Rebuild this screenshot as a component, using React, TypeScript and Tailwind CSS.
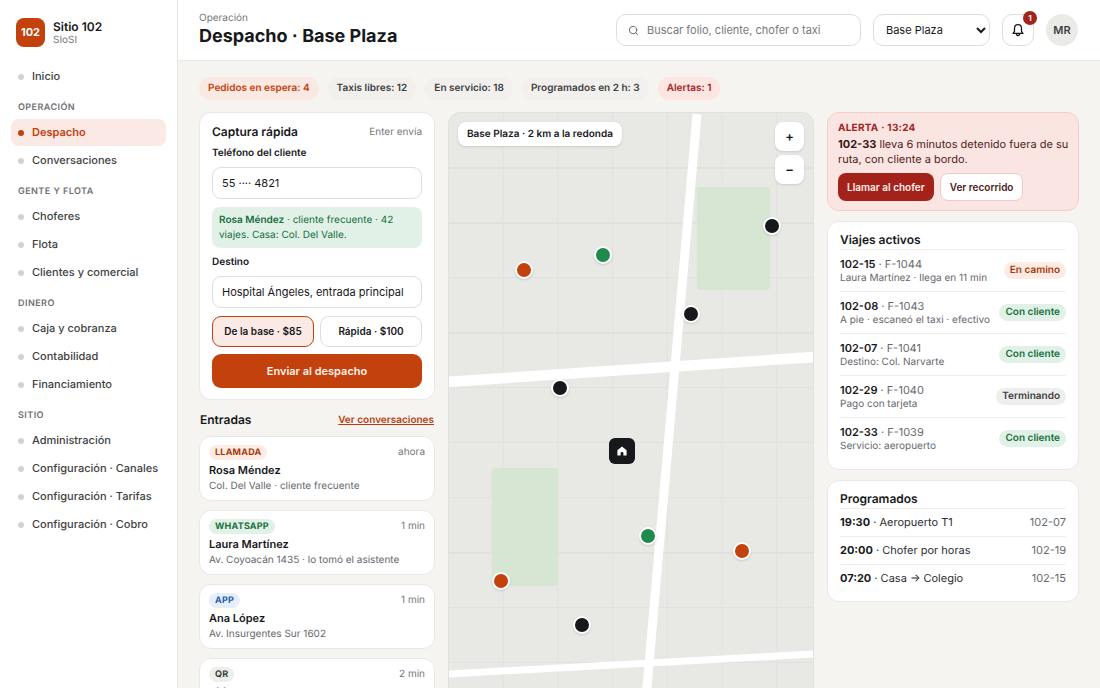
import { Search } from 'lucide-react'
import clsx from 'clsx'

type Tone = 'orange' | 'green' | 'blue' | 'gray' | 'red'

const toneClasses: Record<Tone, string> = {
  orange: 'bg-[#fdece4] text-[#a8380c]',
  green: 'bg-[#e1f1e7] text-[#17703d]',
  blue: 'bg-[#e6eefb] text-[#1d5fb0]',
  gray: 'bg-[#eeeeec] text-[#3d3f42]',
  red: 'bg-[#fde5e2] text-[#a3231a]',
}

const navGroups = [
  { title: '', items: ['Inicio'] },
  { title: 'Operación', items: ['Despacho', 'Conversaciones'] },
  { title: 'Gente y flota', items: ['Choferes', 'Flota', 'Clientes y comercial'] },
  { title: 'Dinero', items: ['Caja y cobranza', 'Contabilidad', 'Financiamiento'] },
  {
    title: 'Sitio',
    items: ['Administración', 'Configuración · Canales', 'Configuración · Tarifas', 'Configuración · Cobro'],
  },
]

const entries: { channel: string; tone: Tone; time: string; name: string; detail: string }[] = [
  { channel: 'Llamada', tone: 'orange', time: 'ahora', name: 'Rosa Méndez', detail: 'Col. Del Valle · cliente frecuente' },
  { channel: 'WhatsApp', tone: 'green', time: '1 min', name: 'Laura Martínez', detail: 'Av. Coyoacán 1435 · lo tomó el asistente' },
  { channel: 'App', tone: 'blue', time: '1 min', name: 'Ana López', detail: 'Av. Insurgentes Sur 1602' },
  { channel: 'QR', tone: 'gray', time: '2 min', name: 'Sitio 102', detail: 'A pie · escaneó el taxi' },
]

const trips: { unit: string; folio: string; detail: string; status: string; tone: Tone }[] = [
  { unit: '102-15', folio: 'F-1044', detail: 'Laura Martínez · llega en 11 min', status: 'En camino', tone: 'orange' },
  { unit: '102-08', folio: 'F-1043', detail: 'A pie · escaneó el taxi · efectivo', status: 'Con cliente', tone: 'green' },
  { unit: '102-07', folio: 'F-1041', detail: 'Destino: Col. Narvarte', status: 'Con cliente', tone: 'green' },
  { unit: '102-29', folio: 'F-1040', detail: 'Pago con tarjeta', status: 'Terminando', tone: 'gray' },
  { unit: '102-33', folio: 'F-1039', detail: 'Servicio: aeropuerto', status: 'Con cliente', tone: 'green' },
]

const scheduled = [
  { time: '19:30', label: 'Aeropuerto T1', unit: '102-07' },
  { time: '20:00', label: 'Chofer por horas', unit: '102-19' },
  { time: '07:20', label: 'Casa → Colegio', unit: '102-15' },
]

// Positions in % of the map
const pins = [
  { x: 20.5, y: 25.6, color: 'bg-[#c2410c]' },
  { x: 42.3, y: 23.1, color: 'bg-[#1f8a4c]' },
  { x: 88.6, y: 18.4, color: 'bg-[#17181b]' },
  { x: 66.5, y: 32.8, color: 'bg-[#17181b]' },
  { x: 30.4, y: 44.8, color: 'bg-[#17181b]' },
  { x: 54.7, y: 68.9, color: 'bg-[#1f8a4c]' },
  { x: 80.5, y: 71.3, color: 'bg-[#c2410c]' },
  { x: 14.4, y: 76.2, color: 'bg-[#c2410c]' },
  { x: 36.5, y: 83.4, color: 'bg-[#17181b]' },
]

function BellIcon() {
  return (
    <svg viewBox="0 0 14 14" className="size-[14px]" fill="none" stroke="#17181b" strokeWidth="1.3" strokeLinejoin="round">
      <path d="M7 1.6C4.8 1.6 3.5 3.2 3.5 5.2V8.4L2.1 10.4H11.9L10.5 8.4V5.2C10.5 3.2 9.2 1.6 7 1.6Z" />
      <path d="M5.4 10.6C5.4 13.4 8.6 13.4 8.6 10.6" />
    </svg>
  )
}

function Sidebar() {
  return (
    <aside className="w-[178px] shrink-0 border-r border-[#e6e6e2] bg-white px-[11px] pt-[18px]">
      <div className="mb-4 flex items-center gap-2 pl-[5px]">
        <div className="flex size-[29px] items-center justify-center rounded-lg bg-[#c2410c] text-[11px] font-bold text-white">
          102
        </div>
        <div>
          <p className="text-[12px] leading-[14px] font-semibold text-[#17181b]">Sitio 102</p>
          <p className="text-[10px] leading-[12px] text-[#76787b]">SIoSI</p>
        </div>
      </div>
      <nav className="flex flex-col">
        {navGroups.map((group) => (
          <div key={group.title}>
            {group.title && (
              <p className="flex h-7 items-center px-[7px] pt-[5px] text-[9px] font-semibold tracking-wider text-[#6f7174] uppercase">
                {group.title}
              </p>
            )}
            {group.items.map((item) => (
              <a
                key={item}
                href="#"
                className={clsx(
                  'mb-px flex h-[27px] items-center gap-2 rounded-lg px-[7px] text-[11px]',
                  item === 'Despacho' ? 'bg-[#fae9e4] font-semibold text-[#c2410c]' : 'font-medium text-[#3d3f42]',
                )}
              >
                <span className={clsx('size-[6px] rounded-full', item === 'Despacho' ? 'bg-[#c2410c]' : 'bg-[#d3d3cf]')} />
                {item}
              </a>
            ))}
          </div>
        ))}
      </nav>
    </aside>
  )
}

function Header() {
  return (
    <header className="flex h-[61px] items-center gap-3 border-b border-[#e9e8e4] bg-white pr-[22px] pl-[21px]">
      <div className="mr-auto">
        <p className="text-[10px] leading-[14px] text-[#76787b]">Operación</p>
        <h1 className="text-[18px] leading-6 font-bold text-[#17181b]">Despacho · Base Plaza</h1>
      </div>
      <label className="flex h-8 w-[245px] items-center gap-2 rounded-[10px] border border-[#dededa] bg-white px-[11px]">
        <Search className="size-[11px] text-[#5f6164]" />
        <span className="sr-only">Buscar</span>
        <input
          type="search"
          placeholder="Buscar folio, cliente, chofer o taxi"
          className="min-w-0 flex-1 text-[11px] text-[#17181b] outline-none placeholder:text-[#76787b]"
        />
      </label>
      <select
        aria-label="Base"
        className="h-8 w-[117px] rounded-[10px] border border-[#dededa] bg-white pl-2 text-[11px] text-[#17181b]"
      >
        <option>Base Plaza</option>
      </select>
      <button
        aria-label="Notificaciones"
        className="relative flex size-8 items-center justify-center rounded-[10px] border border-[#dededa] bg-white"
      >
        <BellIcon />
        <span className="absolute -top-[4px] -right-[4px] flex size-[14px] items-center justify-center rounded-full bg-[#a3231a] text-[8px] font-bold text-white">
          1
        </span>
      </button>
      <div className="flex size-8 items-center justify-center rounded-full bg-[#eaeae6] text-[11px] font-semibold text-[#3d3f42]">
        MR
      </div>
    </header>
  )
}

function StatPill({ tone, children }: { tone: Tone; children: string }) {
  return (
    <li
      className={clsx(
        'flex h-[23px] items-center rounded-full px-[9px] text-[10px] font-semibold',
        tone === 'orange' && 'bg-[#fae9e2] text-[#c2410c]',
        tone === 'gray' && 'bg-[#f1f0ed] text-[#3d3f42]',
        tone === 'red' && 'bg-[#fde5e2] text-[#a3231a]',
      )}
    >
      {children}
    </li>
  )
}

function QuickCapture() {
  const inputClass =
    'mt-[6px] h-8 w-full rounded-[9px] border border-[#dededa] bg-white px-[9px] text-[11px] font-normal text-[#17181b] outline-none'
  return (
    <form className="rounded-xl border border-[#e9e8e4] bg-white px-3 pt-[10px] pb-[11px]">
      <div className="flex items-center justify-between">
        <h2 className="text-[12px] leading-[18px] font-semibold text-[#17181b]">Captura rápida</h2>
        <span className="text-[10px] text-[#76787b]">Enter envía</span>
      </div>
      <label className="mt-1 block text-[10px] font-semibold text-[#17181b]">
        <span className="block leading-[16px]">Teléfono del cliente</span>
        <input className={inputClass} defaultValue="55 ···· 4821" />
      </label>
      <p className="mt-2 rounded-lg bg-[#e1f1e7] px-[7px] pt-[6px] pb-[5px] text-[10px] leading-[15px] text-[#17703d]">
        <strong className="font-semibold">Rosa Méndez</strong> · cliente frecuente · 42 viajes. Casa: Col. Del Valle.
      </p>
      <label className="mt-[6px] block text-[10px] font-semibold text-[#17181b]">
        <span className="block leading-[16px]">Destino</span>
        <input className={inputClass} defaultValue="Hospital Ángeles, entrada principal" />
      </label>
      <div className="mt-2 grid grid-cols-2 gap-[6px] text-[10px] font-semibold text-[#17181b]">
        <button type="button" className="h-[31px] rounded-[9px] border border-[#c2410c] bg-[#fae9e4]">
          De la base · $85
        </button>
        <button type="button" className="h-[31px] rounded-[9px] border border-[#dededa] bg-white">
          Rápida · $100
        </button>
      </div>
      <button type="button" className="mt-[7px] h-[34px] w-full rounded-[9px] bg-[#c2410c] text-[11px] font-semibold text-[#fdf1ea]">
        Enviar al despacho
      </button>
    </form>
  )
}

function EntryList() {
  return (
    <section>
      <div className="flex h-9 items-center justify-between px-px pt-1">
        <h2 className="text-[12px] font-semibold text-[#17181b]">Entradas</h2>
        <a href="#" className="text-[10px] font-semibold text-[#b93f12] underline">
          Ver conversaciones
        </a>
      </div>
      <ul className="flex flex-col gap-[9px]">
        {entries.map((entry) => (
          <li key={entry.channel} className="h-[65px] rounded-xl border border-[#e9e8e4] bg-white px-[9px] pt-2">
            <div className="flex items-center justify-between">
              <span
                className={clsx(
                  'rounded-full px-[6px] text-[9px] leading-[15px] font-bold tracking-wide uppercase',
                  toneClasses[entry.tone],
                )}
              >
                {entry.channel}
              </span>
              <span className="text-[10px] leading-[15px] text-[#76787b]">{entry.time}</span>
            </div>
            <p className="mt-[2px] text-[11px] leading-[16px] font-semibold text-[#17181b]">{entry.name}</p>
            <p className="text-[10px] leading-[16px] text-[#66686b]">{entry.detail}</p>
          </li>
        ))}
      </ul>
    </section>
  )
}

function CityMap() {
  return (
    <section
      aria-label="Mapa"
      className="relative min-h-[616px] overflow-hidden rounded-xl border border-[#e1e1dd] bg-[#e8e9e5]"
    >
      <svg className="absolute inset-0 size-full" viewBox="0 0 366 614" preserveAspectRatio="none">
        <defs>
          <pattern id="blocks" width="55" height="55" patternUnits="userSpaceOnUse">
            <path d="M54.5 0V55M0 54.5H55" stroke="#e1e2de" fill="none" />
          </pattern>
        </defs>
        <rect width="366" height="614" fill="url(#blocks)" />
        <rect x="249" y="74" width="74" height="103" rx="4" fill="#d7e6d2" />
        <rect x="43" y="355" width="67" height="118" rx="4" fill="#d7e6d2" />
        <path d="M-2 269L368 244" stroke="#fff" strokeWidth="10.5" />
        <path d="M-2 561L368 541" stroke="#fff" strokeWidth="7" />
        <path d="M249.4 1L195.4 616" stroke="#fff" strokeWidth="9" />
      </svg>
      <p className="absolute top-[9px] left-[9px] rounded-lg bg-white px-[9px] text-[10px] leading-[24px] font-semibold text-[#17181b] shadow-sm">
        Base Plaza · 2 km a la redonda
      </p>
      <div className="absolute top-[9px] right-[9px] flex flex-col gap-1 text-[13px] font-semibold text-[#17181b]">
        <button aria-label="Acercar" className="size-[29px] rounded-lg bg-white shadow-sm">
          +
        </button>
        <button aria-label="Alejar" className="size-[29px] rounded-lg bg-white shadow-sm">
          −
        </button>
      </div>
      {pins.map((pin) => (
        <span
          key={`${pin.x}-${pin.y}`}
          className={clsx(
            'absolute size-[18px] -translate-x-1/2 -translate-y-1/2 rounded-full border-2 border-white shadow',
            pin.color,
          )}
          style={{ left: `${pin.x}%`, top: `${pin.y}%` }}
        />
      ))}
      <span
        className="absolute flex size-[26px] -translate-x-1/2 -translate-y-1/2 items-center justify-center rounded-md bg-[#17181b]"
        style={{ left: '47.5%', top: '55%' }}
      >
        <svg viewBox="0 0 10 10" className="size-[10px]" fill="#fff">
          <path d="M5 .6L.4 4.3V9.4H3.6V6.7Q3.6 6 5 6T6.4 6.7V9.4H9.6V4.3Z" />
        </svg>
      </span>
    </section>
  )
}

function AlertCard() {
  return (
    <section className="rounded-xl border border-[#f5cdc8] bg-[#fbe5e2] pt-2 pr-[6px] pb-[9px] pl-[10px]">
      <p className="text-[10px] leading-[15px] font-bold tracking-wide text-[#a3231a]">ALERTA · 13:24</p>
      <p className="mt-px text-[11px] leading-[15px] text-[#4b1d1a]">
        <strong className="font-bold text-[#3a1412]">102-33</strong> lleva 6 minutos detenido fuera de su ruta, con cliente a bordo.
      </p>
      <div className="mt-[6px] flex gap-[6px] text-[10px] font-semibold">
        <button className="h-7 rounded-lg bg-[#a3231a] px-[9px] text-[#fdf0ee]">Llamar al chofer</button>
        <button className="h-7 rounded-lg border border-[#f0c9c5] bg-white px-[9px] text-[#4b1d1a]">Ver recorrido</button>
      </div>
    </section>
  )
}

function ActiveTrips() {
  return (
    <section className="rounded-xl border border-[#e9e8e4] bg-white px-3 pt-[9px] pb-[10px]">
      <h2 className="text-[12px] leading-[18px] font-semibold text-[#17181b]">Viajes activos</h2>
      <ul>
        {trips.map((trip) => (
          <li key={trip.unit} className="flex h-[42px] items-center justify-between border-t border-[#eeeeeb]">
            <div className="text-[#66686b]">
              <p className="text-[11px] leading-[14px]">
                <strong className="font-semibold text-[#17181b]">{trip.unit}</strong> · {trip.folio}
              </p>
              <p className="text-[10px] leading-[14px]">{trip.detail}</p>
            </div>
            <span className={clsx('rounded-full px-[6px] text-[10px] leading-[17px] font-semibold', toneClasses[trip.tone])}>
              {trip.status}
            </span>
          </li>
        ))}
      </ul>
    </section>
  )
}

function Scheduled() {
  return (
    <section className="rounded-xl border border-[#e9e8e4] bg-white px-3 pt-[9px] pb-[9px]">
      <h2 className="text-[12px] leading-[18px] font-semibold text-[#17181b]">Programados</h2>
      <ul>
        {scheduled.map((ride) => (
          <li
            key={ride.time}
            className="flex h-7 items-center justify-between border-t border-[#eeeeeb] text-[11px] text-[#2b2d30]"
          >
            <span>
              <strong className="font-bold text-[#17181b]">{ride.time}</strong> · {ride.label}
            </span>
            <span className="text-[#66686b]">{ride.unit}</span>
          </li>
        ))}
      </ul>
    </section>
  )
}

export default function App() {
  return (
    <div className="flex min-h-screen bg-[#f5f4f0] font-['Inter','Liberation_Sans',sans-serif] text-[#17181b] [text-rendering:geometricPrecision]">
      <Sidebar />
      <div className="min-w-0 flex-1">
        <Header />
        <main className="pt-4 pr-[21px] pb-6 pl-[21px]">
          <ul className="flex flex-wrap gap-[9px]">
            <StatPill tone="orange">Pedidos en espera: 4</StatPill>
            <StatPill tone="gray">Taxis libres: 12</StatPill>
            <StatPill tone="gray">En servicio: 18</StatPill>
            <StatPill tone="gray">Programados en 2 h: 3</StatPill>
            <StatPill tone="red">Alertas: 1</StatPill>
          </ul>
          <div className="mt-3 grid grid-cols-[236px_1fr_252px] gap-[13px]">
            <div>
              <QuickCapture />
              <EntryList />
            </div>
            <CityMap />
            <div className="flex flex-col gap-[10px]">
              <AlertCard />
              <ActiveTrips />
              <Scheduled />
            </div>
          </div>
        </main>
      </div>
    </div>
  )
}
